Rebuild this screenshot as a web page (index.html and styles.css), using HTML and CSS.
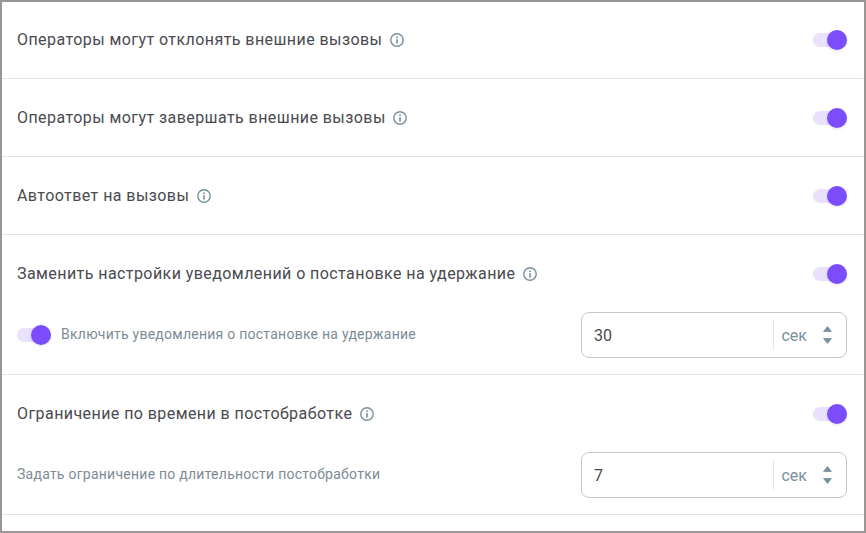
FILE: index.html
```html
<!DOCTYPE html>
<html lang="ru">
<head>
<meta charset="utf-8">
<title>Настройки</title>
<link rel="stylesheet" href="styles.css">
</head>
<body>
<svg class="defs" width="0" height="0" aria-hidden="true">
  <symbol id="info" viewBox="0 0 14 14">
    <circle cx="7" cy="7" r="6.2" fill="none" stroke="currentColor" stroke-width="1.4"/>
    <rect x="6.2" y="6.2" width="1.6" height="4.3" fill="currentColor"/>
    <rect x="6.2" y="3.5" width="1.6" height="1.6" fill="currentColor"/>
  </symbol>
  <symbol id="arrow" viewBox="0 0 9 6">
    <path d="M4.5 .6 L8.4 5.5 H.6 Z" fill="currentColor" stroke="currentColor" stroke-width=".8" stroke-linejoin="round"/>
  </symbol>
</svg>
<main class="panel">
  <section class="row">
    <div class="line">
      <span class="label">Операторы могут отклонять внешние вызовы</span>
      <svg class="info"><use href="#info"/></svg>
      <span class="toggle"><span class="knob"></span></span>
    </div>
  </section>
  <section class="row">
    <div class="line">
      <span class="label">Операторы могут завершать внешние вызовы</span>
      <svg class="info"><use href="#info"/></svg>
      <span class="toggle"><span class="knob"></span></span>
    </div>
  </section>
  <section class="row">
    <div class="line">
      <span class="label">Автоответ на вызовы</span>
      <svg class="info"><use href="#info"/></svg>
      <span class="toggle"><span class="knob"></span></span>
    </div>
  </section>
  <section class="row tall">
    <div class="line">
      <span class="label">Заменить настройки уведомлений о постановке на удержание</span>
      <svg class="info"><use href="#info"/></svg>
      <span class="toggle"><span class="knob"></span></span>
    </div>
    <div class="sub">
      <span class="toggle"><span class="knob"></span></span>
      <span class="hint">Включить уведомления о постановке на удержание</span>
      <div class="field">
        <span class="value">30</span>
        <span class="unit">сек</span>
        <span class="spin"><svg class="arrow"><use href="#arrow"/></svg><svg class="arrow down"><use href="#arrow"/></svg></span>
      </div>
    </div>
  </section>
  <section class="row tall">
    <div class="line">
      <span class="label">Ограничение по времени в постобработке</span>
      <svg class="info"><use href="#info"/></svg>
      <span class="toggle"><span class="knob"></span></span>
    </div>
    <div class="sub">
      <span class="hint flat">Задать ограничение по длительности постобработки</span>
      <div class="field">
        <span class="value">7</span>
        <span class="unit">сек</span>
        <span class="spin"><svg class="arrow"><use href="#arrow"/></svg><svg class="arrow down"><use href="#arrow"/></svg></span>
      </div>
    </div>
  </section>
</main>
</body>
</html>
```
FILE: styles.css
```css
* { box-sizing: border-box; }
html, body { margin: 0; height: 100%; }
body {
  width: 866px;
  height: 533px;
  overflow: hidden;
  background: #fff;
  font-family: Roboto, "Liberation Sans", sans-serif;
}
.defs { position: absolute; }
.panel {
  height: 533px;
  border: 2px solid #9a9696;
  background: #fff;
}
.row {
  height: 78px;
  padding: 0 15px;
  border-bottom: 1px solid #e4e4e4;
}
.row:first-child { margin-top: -1px; }
.row.tall { height: 140px; }
.line {
  display: flex;
  align-items: center;
  height: 77px;
}
.label {
  font-size: 16px;
  letter-spacing: 0.43px;
  color: #4a4a50;
}
.info {
  width: 14px;
  height: 14px;
  margin-left: 7.5px;
  color: #78909c;
}
.line .toggle { margin-left: auto; margin-right: 2px; }
.toggle {
  position: relative;
  display: block;
  flex: none;
  width: 34px;
  height: 14px;
  border-radius: 7px;
  background: #e8e2fd;
}
.knob {
  position: absolute;
  right: 0;
  top: -3px;
  width: 20px;
  height: 20px;
  border-radius: 50%;
  background: #7c4dff;
  box-shadow: 0 1px 3px rgba(0, 0, 0, 0.12);
}
.sub {
  display: flex;
  align-items: center;
  height: 46px;
}
.hint {
  margin-left: 10px;
  margin-bottom: 2px;
  font-size: 14px;
  letter-spacing: 0.25px;
  color: #7d8b94;
}
.hint.flat { margin-left: 0; }
.field {
  display: flex;
  align-items: center;
  width: 266px;
  height: 46px;
  margin-left: auto;
  margin-right: 2px;
  padding: 0 14px 0 12px;
  border: 1px solid #c8c8c8;
  border-radius: 8px;
}
.value {
  flex: 1;
  font-size: 16px;
  color: #4a4a50;
}
.unit {
  display: flex;
  align-items: center;
  height: 30px;
  padding-left: 7px;
  border-left: 1px solid #e4e4e4;
  font-size: 16px;
  color: #78909c;
}
.spin {
  display: flex;
  flex-direction: column;
  gap: 6px;
  margin-left: 16px;
}
.arrow {
  display: block;
  width: 9px;
  height: 6px;
  color: #78909c;
}
.arrow.down { transform: scaleY(-1); }
```
